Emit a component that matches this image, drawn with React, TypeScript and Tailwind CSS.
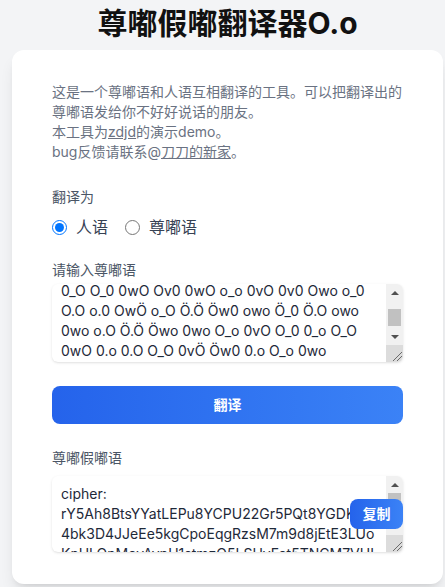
import React, { useEffect, useRef, useState } from 'react';

const inputLines = [
  'o_O 0v0 Öwo O.o 0_Ö OwO o.0 Ö_O 0wo O_o',
  'Ö.0 owo 0.O Ov0 Ö_Ö 0wO o_0 O.Ö Öv0 0_o',
  'OwÖ o.o 0_O Ö.O 0vO owO Ö_0 O_Ö 0.o Owo',
  '0_Ö Ö_0 0wO Ov0 0wÖ o_o 0vÖ 0v0 Owo o_0',
  'O.O o.0 OwÖ o_O Ö.Ö Öw0 owo Ö_0 Ö.O owo',
  '0wo o.O Ö.Ö Öwo 0wo O_o 0vO O_0 0_o O_O',
  '0wO 0.o 0.O O_O 0vÖ Öw0 0.o O_o 0wo',
  'O_o 0wÖ Ö.o 0v0 o_O ÖwO 0.0 Ö_o Ov0 0_Ö',
];

const cipherText =
  'cipher: rY5Ah8BtsYYatLEPu8YCPU22Gr5PQt8YGDKw34bk3D4JJeEe5kgCpoEqgRzsM7m9d8jEtE3LUoKnULQnMevAvpU1stmzQ5LSUvFet5TNCM7VUIa9XkP2wQeRtY7uLmZ3sDfG8hJkNbV1cX4';

const font = "font-['Inter','Noto_Sans_CJK_SC',sans-serif]";

// the browser here hides native scrollbars, so draw the classic one over the textarea
const Scrollbar: React.FC<{ thumbOffset: number; thumbHeight: number }> = ({ thumbOffset, thumbHeight }) => (
  <div className="pointer-events-none absolute top-0 right-0 bottom-0 flex w-[17px] flex-col bg-[#f1f1f1]">
    <div className="flex h-[17px] items-center justify-center">
      <svg width="8" height="4" viewBox="0 0 8 4">
        <polygon points="4,0 8,4 0,4" fill="#505050" />
      </svg>
    </div>
    <div className="flex-1 px-[2px]">
      <div className="bg-[#c1c1c1]" style={{ marginTop: thumbOffset, height: thumbHeight }} />
    </div>
    <div className="flex h-[17px] items-center justify-center">
      <svg width="8" height="4" viewBox="0 0 8 4">
        <polygon points="0,0 8,0 4,4" fill="#505050" />
      </svg>
    </div>
    <div className="h-[17px] bg-[#dcdcdc]">
      <svg width="17" height="17" viewBox="0 0 17 17">
        <line x1="7" y1="16" x2="16" y2="7" stroke="#6b6b6b" strokeWidth="1" />
        <line x1="11" y1="16" x2="16" y2="11" stroke="#6b6b6b" strokeWidth="1" />
      </svg>
    </div>
  </div>
);

const App: React.FC = () => {
  const [target, setTarget] = useState<'human' | 'zdjd'>('human');
  const [input, setInput] = useState(inputLines.join('\n'));
  const [output, setOutput] = useState(cipherText);
  const inputRef = useRef<HTMLTextAreaElement>(null);

  useEffect(() => {
    if (inputRef.current) inputRef.current.scrollTop = 71;
  }, []);

  return (
    <div className={`min-h-[587px] bg-gray-100 ${font}`}>
      <div className="ml-3 w-[431px] pt-[5px]">
        <h1 className="text-center text-3xl font-bold text-[#111]">尊嘟假嘟翻译器O.o</h1>

        <div className="mt-[9px] rounded-xl bg-white px-10 pt-8 pb-8 shadow-lg">
          <p className="text-sm leading-5 text-gray-500">
            这是一个尊嘟语和人语互相翻译的工具。可以把翻译出的尊嘟语发给你不好好说话的朋友。
            <br />
            本工具为<a href="#" className="underline">zdjd</a>的演示demo。
            <br />
            bug反馈请联系@<a href="#" className="underline">刀刀的新家</a>。
          </p>

          <div className="mt-[25px] text-sm leading-5 text-gray-600">翻译为</div>
          <div className="mt-2 flex h-6 items-center text-base text-gray-700">
            <label className="flex items-center gap-[9px]">
              <input
                type="radio"
                name="target"
                className="h-[15px] w-[15px]"
                checked={target === 'human'}
                onChange={() => setTarget('human')}
              />
              人语
            </label>
            <label className="ml-[17px] flex items-center gap-[9px]">
              <input
                type="radio"
                name="target"
                className="h-[15px] w-[15px]"
                checked={target === 'zdjd'}
                onChange={() => setTarget('zdjd')}
              />
              尊嘟语
            </label>
          </div>

          <div className="mt-[21px] text-sm leading-5 text-gray-600">请输入尊嘟语</div>
          <div className="relative mt-1 overflow-hidden rounded-md shadow-sm">
            <textarea
              ref={inputRef}
              value={input}
              onChange={(e) => setInput(e.target.value)}
              className="block h-[78px] w-full resize-none overflow-y-scroll py-2 pr-[25px] pl-[9px] text-sm leading-5 text-gray-800 outline-none"
            />
            <Scrollbar thumbOffset={8} thumbHeight={17} />
          </div>

          <button className="mt-6 h-[38px] w-full rounded-lg bg-linear-to-r from-[#2563eb] to-[#3b82f6] text-sm font-semibold text-white">
            翻译
          </button>

          <div className="mt-6 text-sm leading-5 text-gray-600">尊嘟假嘟语</div>
          <div className="relative mt-2 rounded-md shadow-sm">
            <div className="relative overflow-hidden rounded-md">
              <textarea
                value={output}
                onChange={(e) => setOutput(e.target.value)}
                className="block h-[76px] w-full resize-none overflow-y-scroll py-2 pr-[25px] pl-[9px] text-sm leading-5 text-gray-800 outline-none"
              />
              <Scrollbar thumbOffset={0} thumbHeight={14} />
            </div>
            <button className="absolute top-[23px] right-0 h-[30px] w-[53px] rounded-lg bg-linear-to-r from-[#2563eb] to-[#3b82f6] text-sm font-semibold text-white">
              复制
            </button>
          </div>
        </div>
      </div>
    </div>
  );
};

export default App;
